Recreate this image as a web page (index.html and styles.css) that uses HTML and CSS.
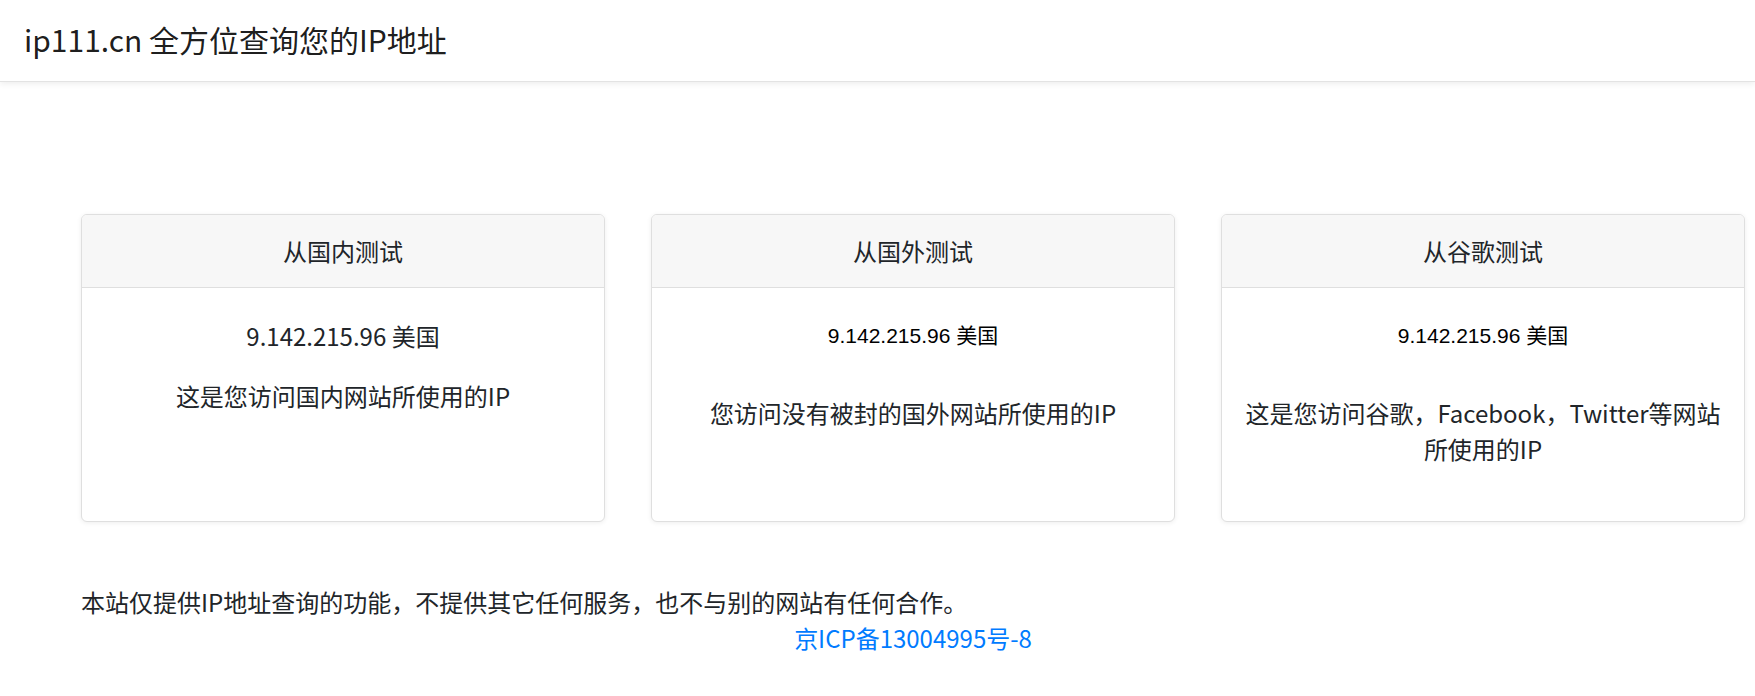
FILE: index.html
```html
<!DOCTYPE html>
<html lang="zh-CN">
<head>
<meta charset="utf-8">
<title>ip111.cn 全方位查询您的IP地址</title>
<link rel="stylesheet" href="styles.css">
</head>
<body>
<header class="navbar">
  <a class="brand" href="#">ip111.cn 全方位查询您的IP地址</a>
</header>
<main class="page">
  <section class="cards">
    <div class="card">
      <div class="card-header">从国内测试</div>
      <div class="card-body">
        <p>9.142.215.96 美国</p>
        <p>这是您访问国内网站所使用的IP</p>
      </div>
    </div>
    <div class="card">
      <div class="card-header">从国外测试</div>
      <div class="card-body">
        <div class="frame">9.142.215.96 美国</div>
        <p>您访问没有被封的国外网站所使用的IP</p>
      </div>
    </div>
    <div class="card">
      <div class="card-header">从谷歌测试</div>
      <div class="card-body">
        <div class="frame">9.142.215.96 美国</div>
        <p>这是您访问谷歌，Facebook，Twitter等网站所使用的IP</p>
      </div>
    </div>
  </section>
  <footer class="footer">
    <p class="notice">本站仅提供IP地址查询的功能，不提供其它任何服务，也不与别的网站有任何合作。</p>
    <div class="icp"><a href="#">京ICP备13004995号-8</a></div>
  </footer>
</main>
</body>
</html>
```
FILE: styles.css
```css
* { box-sizing: border-box; }
html, body { margin: 0; padding: 0; }
body {
  font-family: "Noto Sans CJK SC", "Noto Sans", sans-serif;
  font-size: 24px;
  line-height: 1.5;
  color: #212529;
  background: #fff;
}
.navbar {
  height: 82px;
  display: flex;
  align-items: center;
  padding: 0 24px 2px;
  background: #fff;
  border-bottom: 1px solid #e3e3e3;
  box-shadow: 0 2px 6px rgba(0,0,0,0.07);
}
.brand {
  font-size: 30px;
  line-height: 45px;
  color: rgba(0,0,0,0.9);
  text-decoration: none;
}
.page {
  padding: 132px 10px 0 81px;
}
.cards {
  display: flex;
  gap: 46px;
  align-items: stretch;
}
.card {
  flex: 1 1 0;
  display: flex;
  flex-direction: column;
  border: 1px solid #dfdfdf;
  border-radius: 6px;
  background: #fff;
  box-shadow: 0 1px 5px rgba(0,0,0,0.07);
  overflow: hidden;
}
.card-header {
  padding: 18px 30px;
  line-height: 36px;
  text-align: center;
  background: #f7f7f7;
  border-bottom: 1px solid #dfdfdf;
}
.card-body {
  flex: 1;
  padding: 30px 18px;
  text-align: center;
}
.card-body p {
  margin: 0 0 24px;
}
.frame {
  height: 53px;
  padding-top: 6px;
  margin-bottom: 24px;
  font-family: "Liberation Sans", "Noto Sans CJK SC", sans-serif;
  font-size: 21px;
  line-height: 1.15;
  color: #000;
}
.footer {
  padding-top: 62px;
}
.notice {
  margin: 0;
}
.icp {
  text-align: center;
}
.icp a {
  color: #007bff;
  text-decoration: none;
}
```
